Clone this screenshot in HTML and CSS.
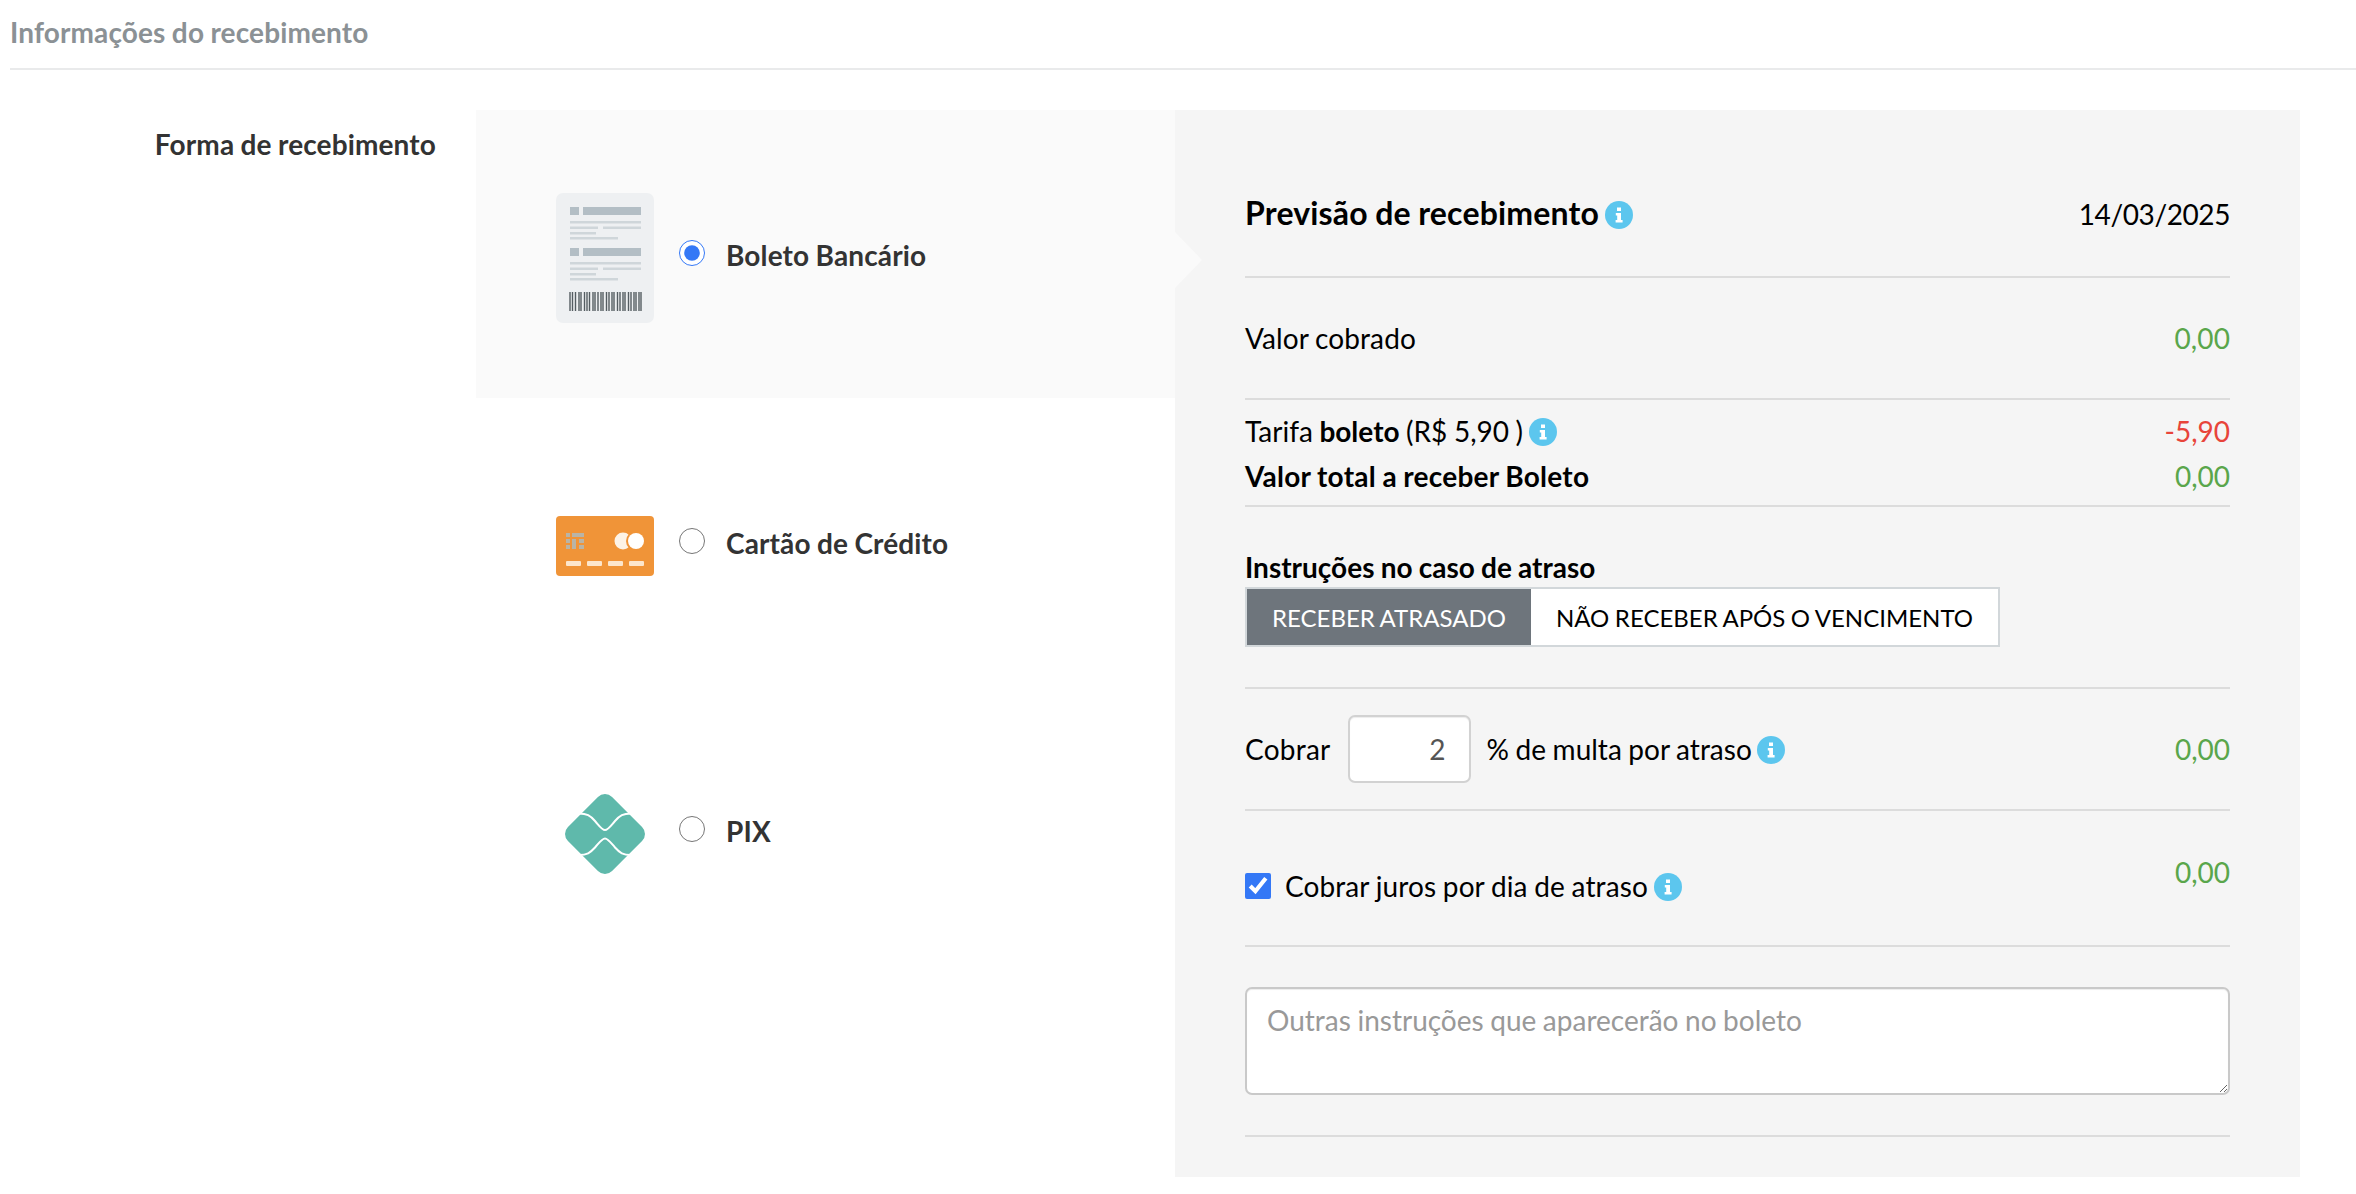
FILE: index.html
```html
<!DOCTYPE html>
<html lang="pt-BR">
<head>
<meta charset="utf-8">
<title>Informações do recebimento</title>
<link rel="stylesheet" href="styles.css">
</head>
<body>
<svg class="defs" width="0" height="0" aria-hidden="true">
  <symbol id="info" viewBox="0 0 28 28">
    <circle cx="14" cy="14" r="14" fill="#5cc6ee"/>
    <path d="M12 6.500h4v3.500h-4zM10.800 12h5.200v7h1.600v2.600h-7v-2.600h1.600v-4.400h-1.400z" fill="#fff"/>
  </symbol>
</svg>

<h1 class="page-title">Informações do recebimento</h1>

<main class="main">
  <div class="side-label">Forma de recebimento</div>

  <div class="options">
    <label class="option option-active">
      <span class="option-icon">
        <svg width="98" height="130" viewBox="0 0 98 130">
          <rect width="98" height="130" rx="7" fill="#eef0f2"/>
          <g fill="#b3bec5"><rect x="14" y="14" width="9" height="8"/><rect x="27" y="14" width="58" height="8"/><rect x="14" y="55" width="9" height="8"/><rect x="27" y="55" width="58" height="8"/></g>
          <g fill="#cfd6da"><rect x="14" y="28" width="71" height="2.500"/><rect x="14" y="33.500" width="28" height="2.500"/><rect x="47" y="33.500" width="38" height="2.500"/><rect x="14" y="39" width="26" height="2.500"/><rect x="14" y="44" width="48" height="2.500"/><rect x="14" y="69" width="71" height="2.500"/><rect x="14" y="74.500" width="28" height="2.500"/><rect x="47" y="74.500" width="38" height="2.500"/><rect x="14" y="80" width="26" height="2.500"/><rect x="14" y="85" width="48" height="2.500"/></g>
          <path d="M14 99v19M16.500 99v19M19.500 99v19M23 99v19M25 99v19M28.500 99v19M31 99v19M33.500 99v19M37 99v19M39 99v19M42 99v19M45 99v19M47 99v19M50.500 99v19M53 99v19M56 99v19M58 99v19M61.500 99v19M64 99v19M67 99v19M69 99v19M72.500 99v19M75 99v19M78 99v19M80 99v19M83 99v19M85 99v19" stroke="#555d62" stroke-width="1.400"/>
        </svg>
      </span>
      <input class="radio" type="radio" name="forma" checked>
      <span class="option-name">Boleto Bancário</span>
    </label>

    <label class="option">
      <span class="option-icon">
        <svg width="98" height="60" viewBox="0 0 98 60">
          <rect width="98" height="60" rx="4" fill="#f09438"/>
          <g fill="#b9b4a6"><rect x="10" y="17" width="4" height="4"/><rect x="10" y="23" width="4" height="4"/><rect x="10" y="29" width="4" height="4"/><rect x="16" y="17" width="12" height="4"/><rect x="16" y="23" width="4" height="10"/><rect x="23" y="23" width="5" height="4"/><rect x="23" y="29" width="5" height="4"/></g>
          <circle cx="67" cy="25" r="8.500" fill="#fdf3e6"/>
          <circle cx="80" cy="25" r="10" fill="#f09438"/>
          <circle cx="80" cy="25" r="8" fill="#fff"/>
          <g fill="#fde6cc"><rect x="10" y="45" width="15" height="5" rx="1"/><rect x="31" y="45" width="15" height="5" rx="1"/><rect x="52" y="45" width="15" height="5" rx="1"/><rect x="73" y="45" width="15" height="5" rx="1"/></g>
        </svg>
      </span>
      <input class="radio" type="radio" name="forma">
      <span class="option-name">Cartão de Crédito</span>
    </label>

    <label class="option">
      <span class="option-icon">
        <svg width="80" height="80" viewBox="0 0 80 80">
          <rect x="8.800" y="8.800" width="62.400" height="62.400" rx="10" fill="#5fb9ab" transform="rotate(45 40 40)"/>
          <path d="M14 19.500c8 0 11 2 16 7.500 4 4.500 7 9 10 9s6-4.500 10-9c5-5.500 8-7.500 16-7.500M14 61c8 0 11-2 16-7.500 4-4.500 7-9 10-9s6 4.500 10 9c5 5.500 8 7.500 16 7.500" fill="none" stroke="#fff" stroke-width="2"/>
        </svg>
      </span>
      <input class="radio" type="radio" name="forma">
      <span class="option-name">PIX</span>
    </label>
  </div>

  <section class="summary">
    <span class="summary-arrow"></span>

    <div class="row row-head">
      <h2 class="summary-title">Previsão de recebimento <svg class="info"><use href="#info"/></svg></h2>
      <span class="date">14/03/2025</span>
    </div>

    <div class="row row-charged">
      <span>Valor cobrado</span>
      <span class="pos">0,00</span>
    </div>

    <div class="row-fee">
      <div class="row">
        <span>Tarifa <b>boleto</b> (R$ 5,90 ) <svg class="info"><use href="#info"/></svg></span>
        <span class="neg">-5,90</span>
      </div>
      <div class="row">
        <b class="total-label">Valor total a receber Boleto</b>
        <span class="pos">0,00</span>
      </div>
    </div>

    <div class="row-late">
      <div class="late-title">Instruções no caso de atraso</div>
      <div class="toggle">
        <button class="toggle-btn toggle-on" type="button">RECEBER ATRASADO</button>
        <button class="toggle-btn" type="button">NÃO RECEBER APÓS O VENCIMENTO</button>
      </div>
    </div>

    <div class="row row-fine">
      <span class="fine-left">
        <span class="fine-label">Cobrar</span>
        <input class="fine-input" type="text" value="2">
        <span>% de multa por atraso <svg class="info"><use href="#info"/></svg></span>
      </span>
      <span class="pos">0,00</span>
    </div>

    <div class="row row-interest">
      <label class="interest-left">
        <input class="check" type="checkbox" checked>
        <span>Cobrar juros por dia de atraso <svg class="info"><use href="#info"/></svg></span>
      </label>
      <span class="pos">0,00</span>
    </div>

    <div class="row-notes">
      <textarea class="notes" placeholder="Outras instruções que aparecerão no boleto"></textarea>
    </div>
  </section>
</main>
</body>
</html>
```

FILE: styles.css
```css
* { box-sizing: border-box; }

html, body {
  margin: 0;
  background: #fff;
}

body {
  font-family: Lato, "Liberation Sans", sans-serif;
  font-size: 28px;
  word-spacing: -0.6px;
  color: #000;
  height: 1194px;
  overflow: hidden;
}

.defs { position: absolute; }

.page-title {
  margin: 0 0 0 10px;
  height: 70px;
  padding-top: 13px;
  font-size: 28px;
  line-height: 38px;
  font-weight: 700;
  letter-spacing: 0.13px;
  color: #8b9195;
  border-bottom: 2px solid #e9eaeb;
}

.main {
  display: flex;
  margin-top: 40px;
}

.side-label {
  width: 436px;
  flex: none;
  padding-top: 15px;
  text-align: right;
  font-weight: 700;
  line-height: 38px;
  letter-spacing: 0.13px;
  color: #333;
}

.options {
  width: 699px;
  margin-left: 40px;
  flex: none;
}

.option {
  display: flex;
  align-items: center;
  height: 288px;
  padding-left: 80px;
  padding-top: 8px;
}

.option-active { background: #fafafa; }

.option-icon {
  display: flex;
  justify-content: center;
  width: 98px;
  flex: none;
}

.option-icon svg { display: block; }

.radio {
  width: 26px;
  height: 26px;
  margin: 0 21px 10px 25px;
  accent-color: #3478f6;
  flex: none;
}

.option-name {
  margin-bottom: 6px;
  font-weight: 700;
  letter-spacing: 0.13px;
  color: #333;
}

.summary {
  position: relative;
  width: 1125px;
  height: 1067px;
  padding: 0 70px;
  background: #f5f5f5;
  flex: none;
}

.summary-arrow {
  position: absolute;
  left: 0;
  top: 122px;
  width: 27px;
  height: 56px;
  background: #fafafa;
  clip-path: polygon(0 0, 100% 50%, 0 100%);
}

.row {
  display: flex;
  justify-content: space-between;
  align-items: center;
}

.row-head {
  height: 168px;
  padding-top: 40px;
  border-bottom: 2px solid #dcdcdc;
}

.summary-title {
  margin: 0 0 1px;
  font-size: 32px;
  font-weight: 700;
  letter-spacing: 0.18px;
}

.date {
  margin-top: 1px;
  font-size: 28px;
  letter-spacing: -0.4px;
}

.info {
  width: 28px;
  height: 28px;
  margin-left: -1px;
  vertical-align: -4px;
}

.row-charged {
  height: 122px;
  letter-spacing: 0.1px;
  border-bottom: 2px solid #dcdcdc;
}

.pos { color: #5aa64b; }
.neg { color: #e8443a; }

.row-fee {
  height: 107px;
  padding-top: 8px;
  border-bottom: 2px solid #dcdcdc;
}

.row-fee .row { height: 45px; }

.total-label { letter-spacing: 0.24px; }

.row-late {
  height: 182px;
  padding-top: 41px;
  border-bottom: 2px solid #dcdcdc;
}

.late-title {
  margin-bottom: 1px;
  font-weight: 700;
  line-height: 38px;
}

.toggle {
  display: flex;
  width: 755px;
  height: 60px;
  border: 2px solid #d2d7da;
  background: #fff;
}

.toggle-btn {
  flex: 1;
  border: 0;
  padding: 0;
  background: #fff;
  font-family: inherit;
  font-size: 24px;
  word-spacing: inherit;
  color: #000;
  white-space: nowrap;
}

.toggle-on {
  flex: none;
  width: 284px;
  background: #6e757c;
  color: #fff;
}

.row-fine {
  height: 122px;
  border-bottom: 2px solid #dcdcdc;
}

.fine-left {
  display: flex;
  align-items: center;
  gap: 16px;
}

.fine-label {
  letter-spacing: 0.25px;
  margin-right: 1px;
}

.fine-input {
  width: 123px;
  height: 68px;
  padding: 0 23px;
  border: 2px solid #d2d2d2;
  border-radius: 7px;
  background: #fff;
  box-shadow: inset 0 1px 1px rgba(0, 0, 0, 0.075);
  font-family: inherit;
  font-size: 28px;
  color: #555;
  text-align: right;
  outline: 0;
}

.row-interest {
  height: 136px;
  padding-top: 44px;
  align-items: flex-start;
  border-bottom: 2px solid #dcdcdc;
}

.interest-left {
  display: flex;
  align-items: center;
  gap: 14px;
  margin-top: 14px;
  letter-spacing: 0.1px;
}

.check {
  width: 26px;
  height: 26px;
  margin: 0;
  accent-color: #3478f6;
}

.row-notes {
  height: 190px;
  padding-top: 40px;
  border-bottom: 2px solid #dcdcdc;
}

.notes {
  display: block;
  width: 100%;
  height: 108px;
  padding: 14px 20px;
  border: 2px solid #c9c9c9;
  border-radius: 7px;
  background: #fff;
  box-shadow: inset 0 1px 1px rgba(0, 0, 0, 0.075);
  font-family: inherit;
  font-size: 28px;
  word-spacing: inherit;
  color: #333;
  outline: 0;
}

.notes::placeholder { color: #999; }
```
